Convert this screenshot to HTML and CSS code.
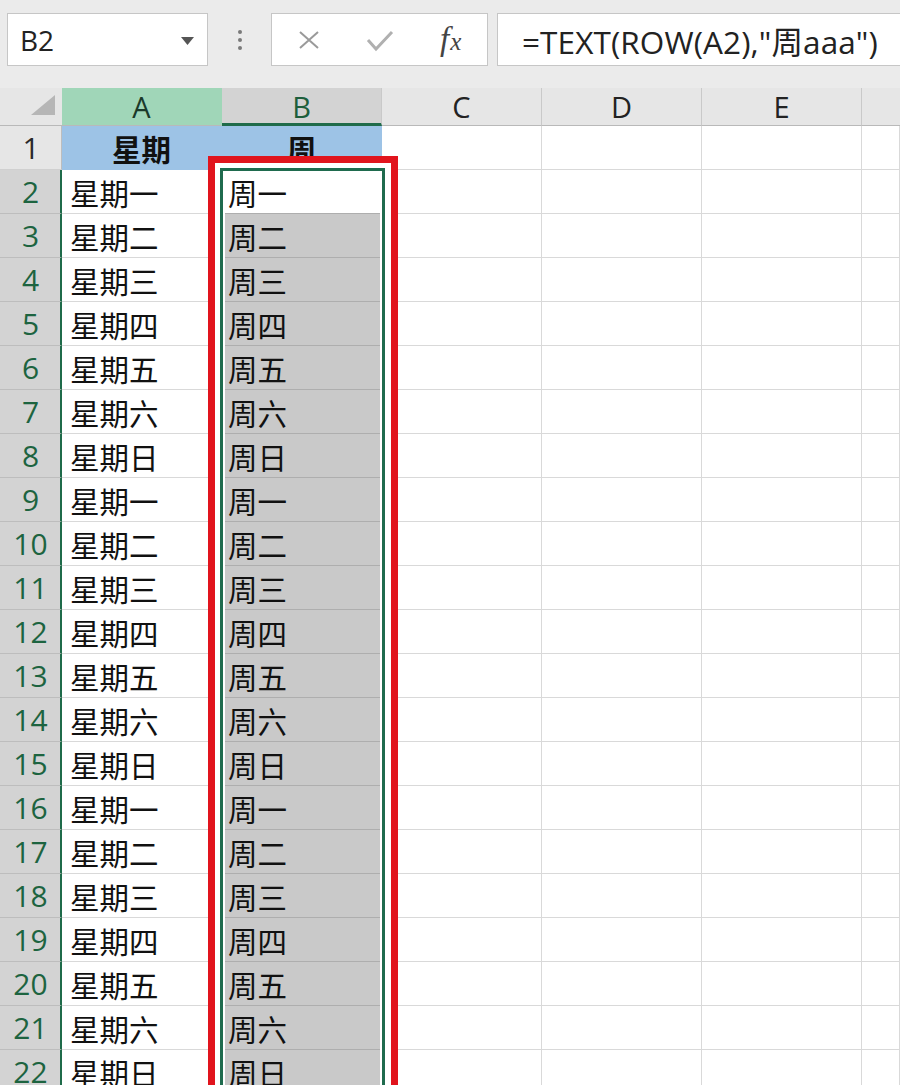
FILE: index.html
```html
<!DOCTYPE html>
<html lang="zh">
<head>
<meta charset="utf-8">
<link rel="stylesheet" href="styles.css">
</head>
<body>
<div class="toolbar">
  <div class="namebox">
    <span class="name">B2</span>
    <svg class="dd" width="13" height="8" viewBox="0 0 13 8"><polygon points="0,0 13,0 6.5,8" fill="#555"/></svg>
  </div>
  <div class="dots"><i></i><i></i><i></i></div>
  <div class="btnbox">
    <svg class="ico-x" width="22" height="18" viewBox="0 0 22 18"><path d="M2 1 L20 17 M20 1 L2 17" stroke="#9a9a9a" stroke-width="2" fill="none"/></svg>
    <svg class="ico-ok" width="28" height="22" viewBox="0 0 28 22"><path d="M2 10 L10 19 L26 2" stroke="#b0b0b0" stroke-width="3" fill="none"/></svg>
    <span class="fx"><span class="f">f</span><span class="x">x</span></span>
  </div>
  <div class="formula">=TEXT(ROW(A2),"周aaa")</div>
</div>

<div class="sheet">
  <div class="grid">
    <div class="ch corner"><svg width="24" height="20" viewBox="0 0 24 20"><polygon points="24,0 24,20 0,20" fill="#b6b6b6"/></svg></div>
    <div class="ch chA">A</div>
    <div class="ch chB">B</div>
    <div class="ch">C</div>
    <div class="ch">D</div>
    <div class="ch">E</div>
    <div class="ch chlast"></div>

    <div class="rh rh1">1</div><div class="c hdr">星期</div><div class="c hdr">周</div><div class="c"></div><div class="c"></div><div class="c"></div><div class="c"></div>
    <div class="rh">2</div><div class="c">星期一</div><div class="c b b2">周一</div><div class="c"></div><div class="c"></div><div class="c"></div><div class="c"></div>
    <div class="rh">3</div><div class="c">星期二</div><div class="c b">周二</div><div class="c"></div><div class="c"></div><div class="c"></div><div class="c"></div>
    <div class="rh">4</div><div class="c">星期三</div><div class="c b">周三</div><div class="c"></div><div class="c"></div><div class="c"></div><div class="c"></div>
    <div class="rh">5</div><div class="c">星期四</div><div class="c b">周四</div><div class="c"></div><div class="c"></div><div class="c"></div><div class="c"></div>
    <div class="rh">6</div><div class="c">星期五</div><div class="c b">周五</div><div class="c"></div><div class="c"></div><div class="c"></div><div class="c"></div>
    <div class="rh">7</div><div class="c">星期六</div><div class="c b">周六</div><div class="c"></div><div class="c"></div><div class="c"></div><div class="c"></div>
    <div class="rh">8</div><div class="c">星期日</div><div class="c b">周日</div><div class="c"></div><div class="c"></div><div class="c"></div><div class="c"></div>
    <div class="rh">9</div><div class="c">星期一</div><div class="c b">周一</div><div class="c"></div><div class="c"></div><div class="c"></div><div class="c"></div>
    <div class="rh">10</div><div class="c">星期二</div><div class="c b">周二</div><div class="c"></div><div class="c"></div><div class="c"></div><div class="c"></div>
    <div class="rh">11</div><div class="c">星期三</div><div class="c b">周三</div><div class="c"></div><div class="c"></div><div class="c"></div><div class="c"></div>
    <div class="rh">12</div><div class="c">星期四</div><div class="c b">周四</div><div class="c"></div><div class="c"></div><div class="c"></div><div class="c"></div>
    <div class="rh">13</div><div class="c">星期五</div><div class="c b">周五</div><div class="c"></div><div class="c"></div><div class="c"></div><div class="c"></div>
    <div class="rh">14</div><div class="c">星期六</div><div class="c b">周六</div><div class="c"></div><div class="c"></div><div class="c"></div><div class="c"></div>
    <div class="rh">15</div><div class="c">星期日</div><div class="c b">周日</div><div class="c"></div><div class="c"></div><div class="c"></div><div class="c"></div>
    <div class="rh">16</div><div class="c">星期一</div><div class="c b">周一</div><div class="c"></div><div class="c"></div><div class="c"></div><div class="c"></div>
    <div class="rh">17</div><div class="c">星期二</div><div class="c b">周二</div><div class="c"></div><div class="c"></div><div class="c"></div><div class="c"></div>
    <div class="rh">18</div><div class="c">星期三</div><div class="c b">周三</div><div class="c"></div><div class="c"></div><div class="c"></div><div class="c"></div>
    <div class="rh">19</div><div class="c">星期四</div><div class="c b">周四</div><div class="c"></div><div class="c"></div><div class="c"></div><div class="c"></div>
    <div class="rh">20</div><div class="c">星期五</div><div class="c b">周五</div><div class="c"></div><div class="c"></div><div class="c"></div><div class="c"></div>
    <div class="rh">21</div><div class="c">星期六</div><div class="c b">周六</div><div class="c"></div><div class="c"></div><div class="c"></div><div class="c"></div>
    <div class="rh">22</div><div class="c">星期日</div><div class="c b">周日</div><div class="c"></div><div class="c"></div><div class="c"></div><div class="c"></div>
  </div>
  <div class="redbox"></div>
  <div class="selbox"></div>
</div>
</body>
</html>
```

FILE: styles.css
```css
* { box-sizing: border-box; }
html, body {
  margin: 0;
  padding: 0;
  width: 900px;
  height: 1085px;
  overflow: hidden;
  background: #fff;
  font-family: "Open Sans", "Noto Sans CJK SC", sans-serif;
  color: #1a1a1a;
}

.toolbar {
  height: 88px;
  background: #ebebeb;
  display: flex;
  align-items: flex-start;
  padding-top: 13px;
  padding-left: 7px;
}
.namebox {
  width: 201px;
  height: 53px;
  background: #fff;
  border: 1px solid #c6c6c6;
  display: flex;
  align-items: center;
  justify-content: space-between;
  padding: 0 13px 0 12px;
}
.name {
  font-size: 28px;
  color: #222;
}
.dd { margin-top: 2px; }
.dots {
  width: 63px;
  height: 53px;
  display: flex;
  flex-direction: column;
  align-items: center;
  justify-content: center;
  gap: 4px;
}
.dots i {
  display: block;
  width: 4px;
  height: 4px;
  border-radius: 50%;
  background: #7a7a7a;
}
.btnbox {
  width: 217px;
  height: 53px;
  background: #fff;
  border: 1px solid #c6c6c6;
  display: flex;
  align-items: center;
  padding-left: 26px;
}
.ico-x { margin-top: 1px; }
.ico-ok { margin-left: 46px; margin-top: 2px; }
.fx {
  margin-left: 46px;
  font-family: "Liberation Serif", serif;
  font-style: italic;
  color: #444;
  display: flex;
  align-items: baseline;
}
.fx .f { font-size: 33px; }
.fx .x { font-size: 25px; margin-left: 1px; }
.formula {
  margin-left: 9px;
  flex: 1;
  height: 53px;
  background: #fff;
  border: 1px solid #c6c6c6;
  border-right: none;
  display: flex;
  align-items: center;
  padding-left: 24px;
  font-size: 31.5px;
  letter-spacing: 0.1px;
  color: #222;
  white-space: nowrap;
}

.sheet {
  position: relative;
}
.grid {
  display: grid;
  grid-template-columns: 62px 160px 160px 160px 160px 160px 38px;
  grid-template-rows: 38px;
  grid-auto-rows: 44px;
}
.ch {
  background: #e6e6e6;
  border-right: 1px solid #c9c9c9;
  border-bottom: 1px solid #b9b9b9;
  display: flex;
  align-items: center;
  justify-content: center;
  font-size: 29px;
  color: #222;
}
.corner {
  justify-content: flex-end;
  align-items: flex-end;
  padding: 0 7px 10px 0;
  border-right: none;
}
.chA { background: #a0d6b8; color: #1b3a2a; border-right-color: #a0d6b8; }
.chB { background: #d3d3d3; color: #1d5f3c; border-bottom: 3px solid #1f6b4a; padding-top: 2px; }
.chlast { border-right: none; }

.rh {
  background: #d3d3d3;
  border-bottom: 1px solid #bdbdbd;
  border-right: 2px solid #1f6b4a;
  display: flex;
  align-items: center;
  justify-content: center;
  font-size: 30px;
  color: #1d6440;
  padding-left: 1px;
}
.rh1 {
  background: #e6e6e6;
  color: #2a2a2a;
  border-right: 1px solid #bdbdbd;
  border-bottom-color: #d0d0d0;
}
.c {
  border-right: 1px solid #d9d9d9;
  border-bottom: 1px solid #d9d9d9;
  display: flex;
  align-items: center;
  padding-left: 8px;
  font-family: "Noto Sans CJK SC", sans-serif;
  font-size: 29.5px;
  color: #111;
  white-space: nowrap;
  overflow: hidden;
}
.hdr {
  background: #9dc3e6;
  justify-content: center;
  padding-left: 0;
  font-weight: bold;
  border-right-color: #9dc3e6;
  border-bottom-color: #9dc3e6;
}
.b {
  background: #c9c9c9;
  border-bottom-color: #aeaeae;
  padding-left: 6px;
}
.b2 { background: #fff; }

.redbox {
  position: absolute;
  left: 208px;
  top: 68px;
  width: 190px;
  height: 1100px;
  border: 7px solid #e1141d;
  box-shadow: inset 0 0 0 6px #fff;
}
.selbox {
  position: absolute;
  left: 220px;
  top: 80px;
  width: 165px;
  height: 1100px;
  border: 3px solid #1f6b4e;
  box-shadow: inset 0 0 0 2px #fff;
}
```
